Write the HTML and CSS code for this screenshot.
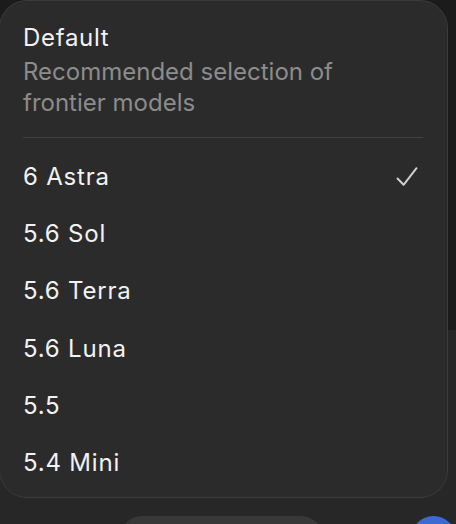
FILE: index.html
```html
<!DOCTYPE html>
<html lang="en">
<head>
<meta charset="utf-8">
<title>Model picker</title>
<link rel="stylesheet" href="styles.css">
</head>
<body>
<div class="screen">
  <div class="backdrop"></div>
  <div class="menu">
    <div class="header">
      <div class="title">Default</div>
      <div class="desc">Recommended selection of<br>frontier models</div>
    </div>
    <div class="divider"></div>
    <ul class="list">
      <li class="item selected"><span>6 Astra</span>
        <svg class="check" width="24" height="22" viewBox="0 0 24 22"><path d="M2.5 12.5 L8.6 18.8 L21.5 2.2" fill="none" stroke="#cfcfcf" stroke-width="2" stroke-linecap="round" stroke-linejoin="round"/></svg>
      </li>
      <li class="item"><span>5.6 Sol</span></li>
      <li class="item"><span>5.6 Terra</span></li>
      <li class="item"><span>5.6 Luna</span></li>
      <li class="item"><span>5.5</span></li>
      <li class="item"><span>5.4 Mini</span></li>
    </ul>
  </div>
  <div class="composer">
    <div class="pill"></div>
    <div class="send"></div>
  </div>
</div>
</body>
</html>
```

FILE: styles.css
```css
html, body {
  margin: 0;
  padding: 0;
  background: #1b1b1b;
  width: 456px;
  height: 524px;
  overflow: hidden;
}
.screen {
  position: relative;
  width: 456px;
  height: 524px;
  overflow: hidden;
  font-family: Inter, "Noto Sans", sans-serif;
}
.backdrop {
  position: absolute;
  left: -40px;
  right: -40px;
  top: 330px;
  bottom: -40px;
  background: #272727;
  border-radius: 40px;
}
.menu {
  position: relative;
  z-index: 1;
  box-sizing: border-box;
  margin-left: -1px;
  width: 449px;
  height: 498px;
  background: #2b2b2b;
  border: 1px solid #3b3b3b;
  border-radius: 28px;
  padding: 21px 24px 0 23px;
}
.title {
  color: #f2f2f2;
  font-size: 24px;
  letter-spacing: 0.7px;
  line-height: 31px;
  margin-bottom: 3px;
}
.desc {
  color: #8c8c8c;
  font-size: 24px;
  line-height: 31px;
}
.divider {
  height: 1px;
  background: #414141;
  margin-top: 19px;
}
.list {
  list-style: none;
  margin: 10px 0 0;
  padding: 0;
}
.item {
  display: flex;
  align-items: center;
  justify-content: space-between;
  height: 57.2px;
  color: #f2f2f2;
  font-size: 24px;
  letter-spacing: 0.8px;
  line-height: 31px;
}
.check {
  margin-right: 4px;
}
.composer {
  position: relative;
  z-index: 1;
  display: flex;
  align-items: flex-start;
  margin-top: 18px;
  padding-left: 120px;
}
.pill {
  width: 210px;
  height: 44px;
  background: #383838;
  border-radius: 22px;
}
.send {
  width: 46px;
  height: 46px;
  border-radius: 50%;
  background: #3c6ad2;
  margin-left: 88px;
}
```
